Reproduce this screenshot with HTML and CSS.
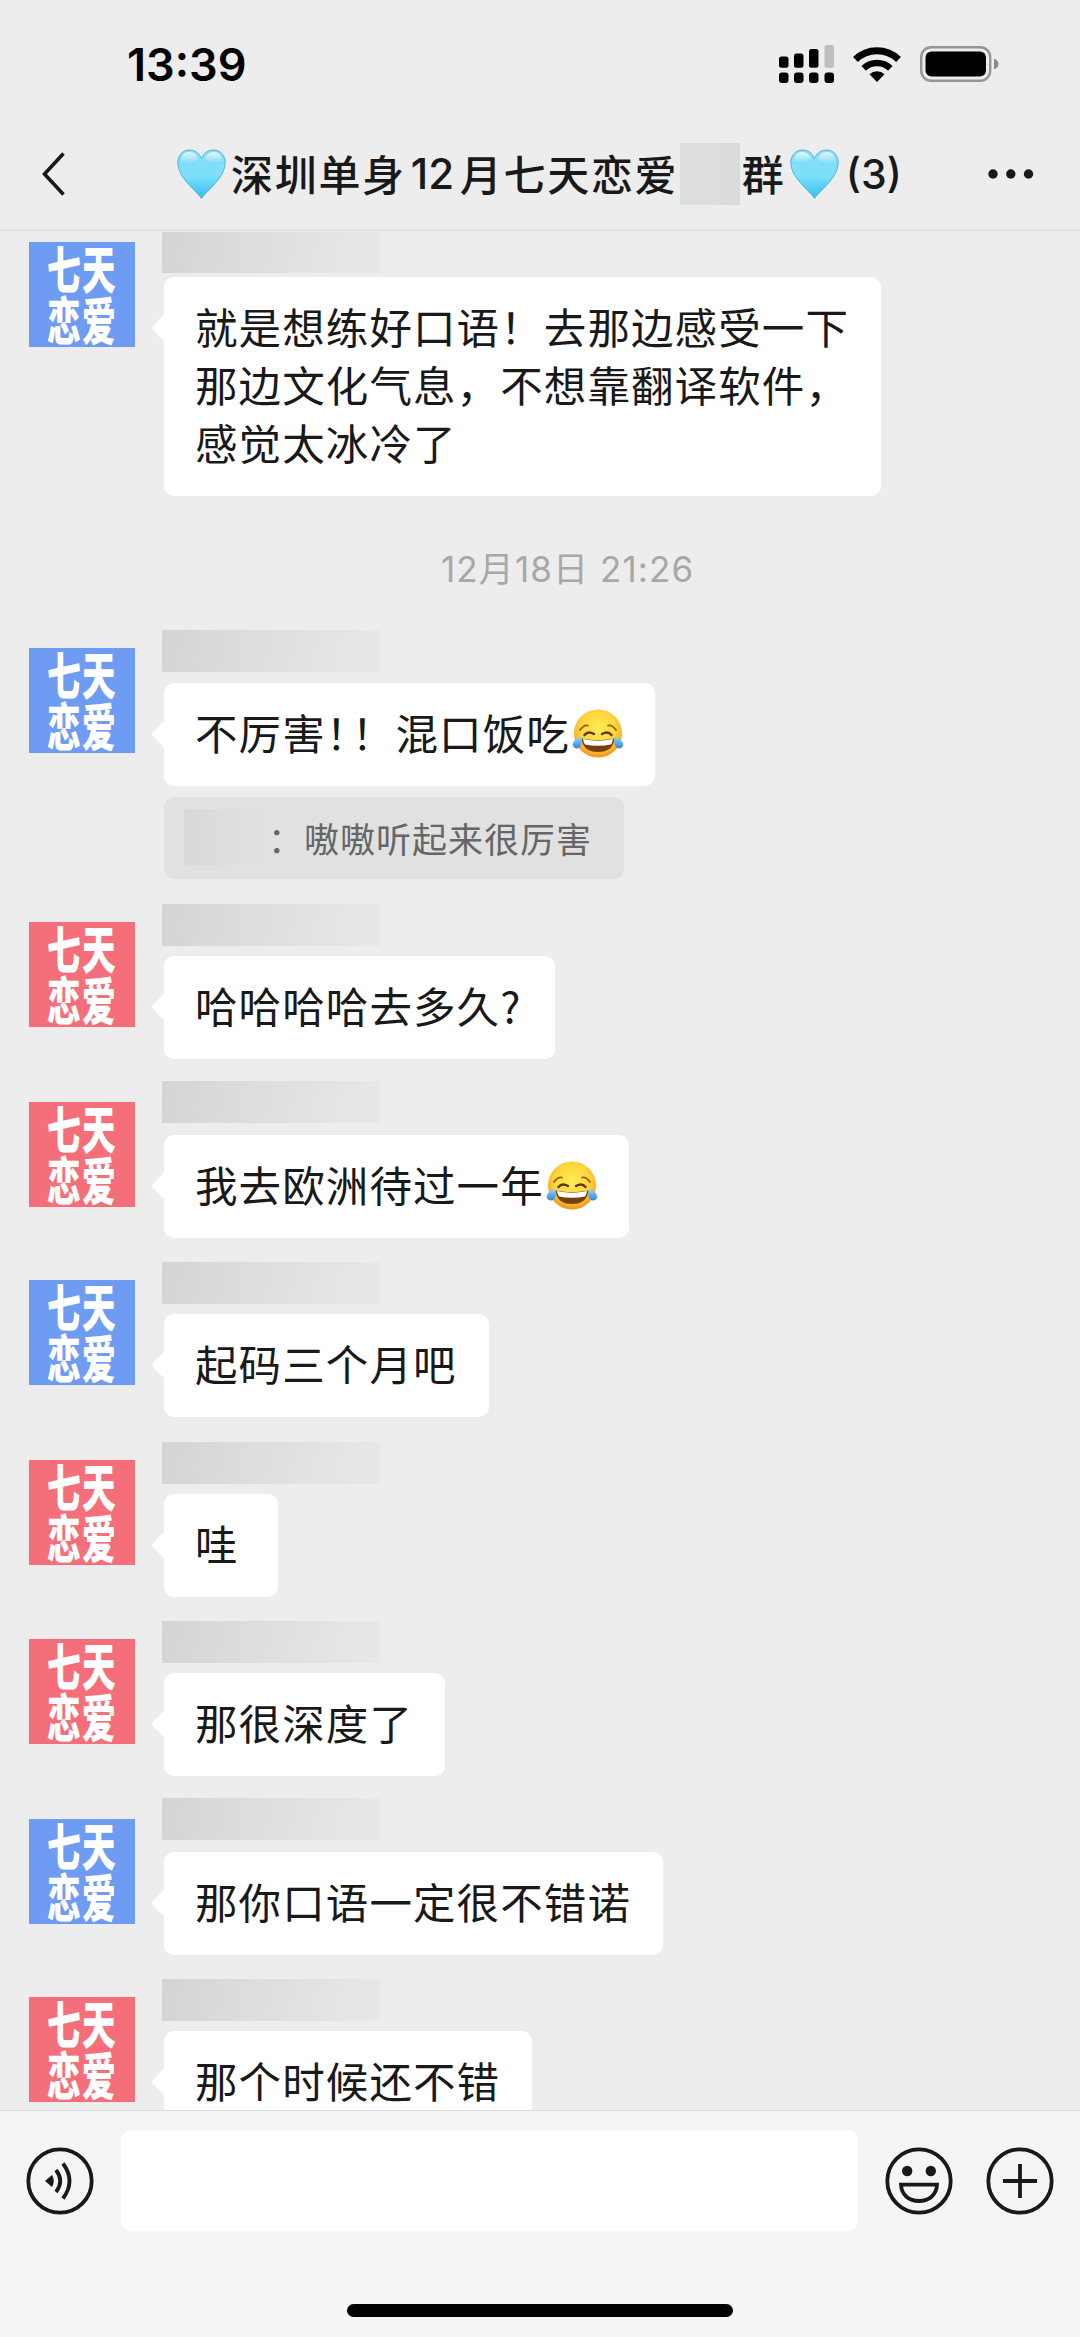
FILE: index.html
```html
<!DOCTYPE html>
<html lang="zh-CN">
<head>
<meta charset="utf-8">
<title>群聊</title>
<link rel="stylesheet" href="styles.css">
</head>
<body>
<svg class="defs" width="0" height="0" aria-hidden="true">
  <defs>
    <linearGradient id="heartFill" x1="0" y1="0" x2="0" y2="1">
      <stop offset="0" stop-color="#8adcf8"/><stop offset=".55" stop-color="#7be0fd"/><stop offset="1" stop-color="#32bdee"/>
    </linearGradient>
    <linearGradient id="heartShine" x1="0" y1="0" x2="0" y2="1">
      <stop offset="0" stop-color="#e4f8ff"/><stop offset="1" stop-color="#e4f8ff" stop-opacity="0"/>
    </linearGradient>
    <radialGradient id="faceFill" cx=".5" cy=".4" r=".6">
      <stop offset="0" stop-color="#ffeb55"/><stop offset=".6" stop-color="#ffd63c"/><stop offset=".85" stop-color="#fbb128"/><stop offset="1" stop-color="#ee9015"/>
    </radialGradient>
    <linearGradient id="tearFill" x1="0" y1="0" x2="0" y2="1">
      <stop offset="0" stop-color="#9ad8fa"/><stop offset="1" stop-color="#2d86da"/>
    </linearGradient>
    <symbol id="heart" viewBox="0 0 49 50">
      <path d="M24.5 49.5C20 42 1 29 .8 14.200C.6 6 6 1 12.500 1C18 1 22.500 4 24.500 9.800C26.500 4 31 1 36.500 1C43 1 48.400 6 48.200 14.200C48 29 29 42 24.500 49.500Z" fill="url(#heartFill)" stroke="#55b5d8" stroke-width="1"/>
      <path d="M4 12C4 5 8 3 12.500 3C17 3 20 6 21 10C17 14 8 15 4 12Z" fill="url(#heartShine)"/>
      <path d="M28 10C29 6 32 3 36.500 3C41 3 45 5 45 12C41 15 32 14 28 10Z" fill="url(#heartShine)"/>
    </symbol>
    <symbol id="joy" viewBox="0 0 52 50">
      <circle cx="26" cy="24.500" r="24" fill="url(#faceFill)"/>
      <path d="M8 21Q12 15.500 16 16.500M36 16.500Q40 15.500 44 21" fill="none" stroke="#9a5c12" stroke-width="1.800" stroke-linecap="round"/>
      <path d="M12.500 26Q16 21.500 22 25M30 25Q36 21.500 39.500 26" fill="none" stroke="#63350c" stroke-width="2.400" stroke-linecap="round"/>
      <path d="M9.500 29.500Q26 33 42.500 29.500Q41 43 26 43Q11 43 9.500 29.500Z" fill="#75400f"/>
      <path d="M11 30Q26 33.500 41 30Q40.500 34 39 35.500Q26 38 13 35.500Q11.500 34 11 30Z" fill="#fff"/>
      <path d="M9.500 27.500C5 28.500.500 32.500.800 36C1.200 40 7.500 41 9 36.500C10 33.500 9.500 31 9.500 27.500Z" fill="url(#tearFill)"/>
      <path d="M42.500 27.500C47 28.500 51.500 32.500 51.200 36C50.800 40 44.500 41 43 36.500C42 33.500 42.500 31 42.500 27.500Z" fill="url(#tearFill)"/>
    </symbol>
  </defs>
</svg>

<div class="screen">
  <header class="top">
    <div class="status">
      <span class="clock">13:39</span>
      <div class="status-icons">
        <svg width="55" height="38" viewBox="0 0 55 38">
          <rect x="0" y="11.500" width="9.500" height="11.200" rx="2.500"/><rect x="15" y="8.500" width="9.500" height="14.200" rx="2.500"/><rect x="30" y="4" width="9.500" height="18.700" rx="2.500"/>
          <rect x="45.500" y="0" width="9.500" height="22.700" rx="2" fill="#bfbfbf"/>
          <rect x="0" y="27.500" width="9.500" height="10.500" rx="3"/><rect x="15" y="27.500" width="9.500" height="10.500" rx="3"/><rect x="30" y="27.500" width="9.500" height="10.500" rx="3"/><rect x="45.500" y="27.500" width="9.500" height="10.500" rx="3"/>
        </svg>
        <svg class="wifi" width="48" height="36" viewBox="0 0 48 36">
          <path d="M2.500 13.500A31 31 0 0 1 45.500 13.500" fill="none" stroke="#000" stroke-width="7"/>
          <path d="M10.700 22.300A19.500 19.500 0 0 1 37.300 22.300" fill="none" stroke="#000" stroke-width="6.600"/>
          <path d="M24 36L16.500 28.200A11 11 0 0 1 31.500 28.200Z"/>
        </svg>
        <svg width="80" height="36" viewBox="0 0 80 36">
          <rect x="1.200" y="1.200" width="69" height="33.600" rx="10" fill="none" stroke="#959595" stroke-width="2.400"/>
          <rect x="5.500" y="5.500" width="60.500" height="25" rx="6"/>
          <path d="M74 12.500Q78.500 14.500 78.500 18T74 23.500Z" fill="#8a8a8a"/>
        </svg>
      </div>
    </div>
    <div class="nav">
      <svg class="back" width="24" height="44" viewBox="0 0 24 44"><path d="M21.500 1.500L2.500 22L21.500 42.500" fill="none" stroke="#191919" stroke-width="3.600"/></svg>
      <h1 class="title">
        <svg class="heart" width="49" height="50"><use href="#heart"/></svg>
        <span class="t-city">深圳单身</span><span class="t-num">12</span><span class="t-rest">月七天恋爱</span><i class="mask"></i><span class="t-group">群</span>
        <svg class="heart" width="49" height="50"><use href="#heart"/></svg>
        <span class="t-count">(3)</span>
      </h1>
      <svg class="more" width="46" height="10" viewBox="0 0 46 10" fill="#191919"><circle cx="5" cy="5" r="4.700"/><circle cx="22.800" cy="5" r="4.700"/><circle cx="40.500" cy="5" r="4.700"/></svg>
    </div>
  </header>

  <main class="chat">
    <article class="msg first">
      <div class="avatar blue"><span>七天<br>恋爱</span></div>
      <div class="body"><div class="name"></div><p class="bubble">就是想练好口语！去那边感受一下<br>那边文化气息，不想靠翻译软件，<br>感觉太冰冷了</p></div>
    </article>
    <time class="stamp">12月18日 21:26</time>
    <article class="msg second">
      <div class="avatar blue"><span>七天<br>恋爱</span></div>
      <div class="body"><div class="name"></div><p class="bubble">不厉害<span class="tight">！</span>！混口饭吃<svg class="emoji" width="52" height="50"><use href="#joy"/></svg></p>
        <div class="quote"><i class="quote-mask"></i>：嗷嗷听起来很厉害</div></div>
    </article>
    <article class="msg">
      <div class="avatar red"><span>七天<br>恋爱</span></div>
      <div class="body"><div class="name"></div><p class="bubble">哈哈哈哈去多久<span class="ask">?</span></p></div>
    </article>
    <article class="msg high">
      <div class="avatar red"><span>七天<br>恋爱</span></div>
      <div class="body"><div class="name"></div><p class="bubble">我去欧洲待过一年<svg class="emoji" width="52" height="50"><use href="#joy"/></svg></p></div>
    </article>
    <article class="msg">
      <div class="avatar blue"><span>七天<br>恋爱</span></div>
      <div class="body"><div class="name"></div><p class="bubble">起码三个月吧</p></div>
    </article>
    <article class="msg">
      <div class="avatar red"><span>七天<br>恋爱</span></div>
      <div class="body"><div class="name"></div><p class="bubble">哇</p></div>
    </article>
    <article class="msg">
      <div class="avatar red"><span>七天<br>恋爱</span></div>
      <div class="body"><div class="name"></div><p class="bubble">那很深度了</p></div>
    </article>
    <article class="msg high">
      <div class="avatar blue"><span>七天<br>恋爱</span></div>
      <div class="body"><div class="name"></div><p class="bubble">那你口语一定很不错诺</p></div>
    </article>
    <article class="msg">
      <div class="avatar red"><span>七天<br>恋爱</span></div>
      <div class="body"><div class="name"></div><p class="bubble">那个时候还不错</p></div>
    </article>
  </main>

  <footer class="bottom">
    <div class="composer">
      <svg width="68" height="68" viewBox="0 0 68 68" fill="none" stroke="#191919" stroke-width="3.800">
        <circle cx="34" cy="34" r="31.700"/>
        <path d="M19 34L26 28Q29.500 34 26 40Z" fill="#191919" stroke="none"/>
        <path d="M30 23Q38.500 34 30 45M37 16.500Q50 34 37 51.500"/>
      </svg>
      <div class="input"></div>
      <svg width="68" height="68" viewBox="0 0 68 68" fill="none" stroke="#191919" stroke-width="3.800">
        <circle cx="34" cy="34" r="31.700"/>
        <circle cx="22.200" cy="24" r="5.200" fill="#191919" stroke="none"/><circle cx="45.800" cy="24" r="5.200" fill="#191919" stroke="none"/>
        <path d="M16 37.700H52C51.500 48 44 54 34 54S16.500 48 16 37.700Z"/>
      </svg>
      <svg width="68" height="68" viewBox="0 0 68 68" fill="none" stroke="#191919" stroke-width="3.800">
        <circle cx="34" cy="34" r="31.700"/>
        <path d="M17 34H51M34 17V51"/>
      </svg>
    </div>
    <div class="home-bar"></div>
  </footer>
</div>
</body>
</html>
```
FILE: styles.css
```css
* { box-sizing: border-box; }

body {
  margin: 0;
  background: #ededed;
  color: #191919;
  font-family: Inter, "Noto Sans CJK SC", sans-serif;
}

.defs { display: block; position: absolute; }
svg { display: block; flex: none; }

.screen {
  display: flex;
  flex-direction: column;
  width: 1080px;
  height: 2337px;
  overflow: hidden;
}

/* Status bar and title */
.top {
  height: 231px;
  border-bottom: 2px solid #e0e0e0;
}

.status {
  display: flex;
  justify-content: space-between;
  align-items: center;
  height: 128px;
  padding: 0 80px 0 127px;
}

.clock {
  padding-top: 2px;
  color: #000;
  font-size: 45px;
  font-weight: 600;
  line-height: 54px;
}

.status-icons {
  display: flex;
  align-items: center;
}

.wifi { margin: 0 19px; }

.nav {
  display: flex;
  align-items: center;
  height: 92px;
  padding: 0 46px 0 42px;
}

.title {
  display: flex;
  align-items: center;
  margin: 0 auto 0 0;
  padding-left: 111px;
  font-family: "Noto Sans CJK SC", sans-serif;
  font-size: 42px;
  font-weight: 500;
  line-height: 60px;
  letter-spacing: 1.700px;
  white-space: nowrap;
}

.t-city, .t-rest, .t-group { padding-bottom: 3px; }
.t-city { margin-left: 5px; }
.t-num, .t-count { font-family: Inter, sans-serif; letter-spacing: 0; }
.t-num { width: 49px; margin-left: 5px; }
.t-rest { width: 220px; }
.mask { width: 60px; height: 62px; background: linear-gradient(90deg, #dcdddd 55%, #d9dbdb); }
.t-group { width: 44px; margin: 0 4px 0 2px; }
.t-count { margin-left: 7px; font-size: 41px; }

/* Conversation */
.chat {
  display: grid;
  grid-template-rows: 278px 128px 274px 180px 178px 180px 179px 180px 178px auto;
  height: 1879px;
  padding: 11px 0 0 29px;
  overflow: hidden;
}

.msg {
  --name-top: -18px;
  --name-height: 42px;
  --bubble-top: 34px;
  display: flex;
  align-items: flex-start;
}

.first { --name-top: -10px; --name-height: 41px; --bubble-top: 35px; }
.second { --bubble-top: 35px; }
.high { --name-top: -21px; --bubble-top: 33px; }

.avatar {
  display: flex;
  justify-content: center;
  width: 106px;
  height: 105px;
  color: #fff;
  font-family: "Noto Sans CJK SC", sans-serif;
  font-size: 51px;
  font-weight: 900;
  line-height: 51px;
  white-space: nowrap;
}

.avatar span {
  letter-spacing: 2px;
  transform: scaleX(.66);
}

.blue { background: #6f9cf3; }
.red { background: #f46f7a; }

.body {
  display: flex;
  flex-direction: column;
  align-items: flex-start;
  margin-left: 27px;
}

.name {
  width: 218px;
  height: var(--name-height);
  margin-top: var(--name-top);
  margin-bottom: calc(var(--bubble-top) - var(--name-height) - var(--name-top));
  background: linear-gradient(100deg, #d5d4d4, #dddddd 40%, #e8e8e8);
}

.bubble {
  position: relative;
  min-width: 114px;
  margin: 0 0 0 2px;
  padding: 20px 32px 25px 31px;
  border-radius: 10px;
  background: #fff;
  font-family: "Noto Sans CJK SC", sans-serif;
  font-size: 42.500px;
  line-height: 58px;
  letter-spacing: 1.100px;
  white-space: nowrap;
}

/* Speech pointer beside the avatar */
.bubble::before {
  content: "";
  position: absolute;
  top: 41px;
  left: -9px;
  width: 20px;
  height: 20px;
  border-radius: 4px;
  background: #fff;
  transform: rotate(45deg);
}

.tight { letter-spacing: -16.500px; }
.ask { letter-spacing: 3px; }

.emoji { display: inline-block; margin: 0 -1px 0 2px; vertical-align: -9px; }

.quote {
  display: flex;
  align-items: center;
  height: 82px;
  margin: 11px 0 0 2px;
  padding: 0 32px 2px 20px;
  border-radius: 10px;
  background: #e1e1e1;
  color: #666;
  font-family: "Noto Sans CJK SC", sans-serif;
  font-size: 35px;
  letter-spacing: 1px;
  white-space: nowrap;
}

.quote-mask {
  width: 84px;
  height: 56px;
  background: linear-gradient(90deg, #dad9d8, #e1e1e1);
}

.stamp {
  height: 98px;
  padding-left: 412px;
  color: #a8a8a8;
  font-size: 35px;
  line-height: 98px;
  letter-spacing: 1.100px;
}

/* Message composer */
.bottom {
  flex: 1;
  border-top: 1px solid #dcdcdc;
  background: #f5f5f5;
}

.composer {
  display: flex;
  align-items: center;
  height: 139px;
  padding: 0 26px;
}

.input {
  width: 737px;
  height: 101px;
  margin: 0 27px;
  border-radius: 10px;
  background: #fff;
}

.composer svg:last-child { margin-left: 33px; }

.home-bar {
  width: 386px;
  height: 13px;
  margin: 54px auto 0;
  border-radius: 7px;
  background: #000;
}
```
